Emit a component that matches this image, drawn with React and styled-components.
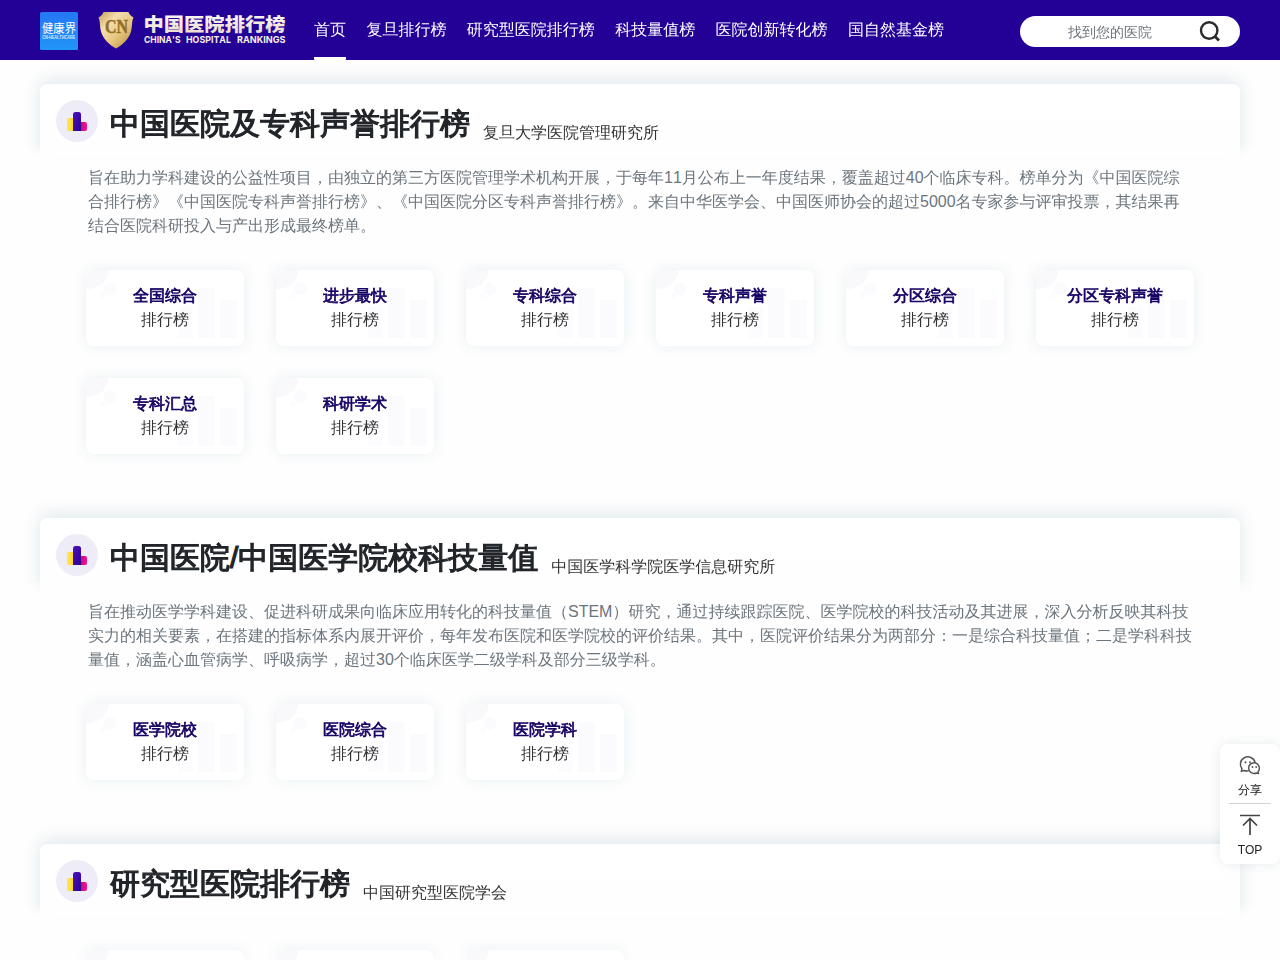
import styled, { createGlobalStyle } from 'styled-components';

const GlobalStyle = createGlobalStyle`
    * {
        box-sizing: border-box;
    }

    body {
        margin: 0;
        height: 960px;
        overflow: hidden;
        background: #fefefe;
        color: #212529;
        font-family: "Liberation Sans", "WenQuanYi Zen Hei", "Noto Sans CJK SC", sans-serif;
        font-size: 16px;
        line-height: 24px;
        font-kerning: none;
        text-spacing-trim: space-all;
    }
`

const menu = ['首页', '复旦排行榜', '研究型医院排行榜', '科技量值榜', '医院创新转化榜', '国自然基金榜'];

const sections = [
    {
        title: '中国医院及专科声誉排行榜',
        author: '复旦大学医院管理研究所',
        text: [
            '旨在助力学科建设的公益性项目，由独立的第三方医院管理学术机构开展，于每年11月公布上一年度结果，覆盖超过40个临床专科。榜单分为《中国医院综',
            '合排行榜》《中国医院专科声誉排行榜》、《中国医院分区专科声誉排行榜》。来自中华医学会、中国医师协会的超过5000名专家参与评审投票，其结果再',
            '结合医院科研投入与产出形成最终榜单。',
        ],
        cards: ['全国综合', '进步最快', '专科综合', '专科声誉', '分区综合', '分区专科声誉', '专科汇总', '科研学术'],
    },
    {
        title: '中国医院/中国医学院校科技量值',
        author: '中国医学科学院医学信息研究所',
        text: [
            '旨在推动医学学科建设、促进科研成果向临床应用转化的科技量值（STEM）研究，通过持续跟踪医院、医学院校的科技活动及其进展，深入分析反映其科技',
            '实力的相关要素，在搭建的指标体系内展开评价，每年发布医院和医学院校的评价结果。其中，医院评价结果分为两部分：一是综合科技量值；二是学科科技',
            '量值，涵盖心血管病学、呼吸病学，超过30个临床医学二级学科及部分三级学科。',
        ],
        cards: ['医学院校', '医院综合', '医院学科'],
    },
    {
        title: '研究型医院排行榜',
        author: '中国研究型医院学会',
        text: [],
        cards: ['', '', ''],
    },
];

function BrandLogo() {
    return <BrandSvg viewBox="0 0 190 40">
        <defs>
            <linearGradient id="gold" x1="0" y1="0" x2="1" y2="1">
                <stop offset="0" stopColor="#c29c50" />
                <stop offset=".3" stopColor="#f3dfae" />
                <stop offset=".6" stopColor="#e6c67c" />
                <stop offset="1" stopColor="#b08538" />
            </linearGradient>
            <linearGradient id="cream" x1="0" y1="0" x2="0" y2="1">
                <stop offset="0" stopColor="#fff" />
                <stop offset="1" stopColor="#e9d9c8" />
            </linearGradient>
        </defs>
        <path d="M5.500 1H30.500C31 3 33 5 35.500 6.500C33.500 11 34.500 15 33 20.500C31 28 24.500 34 18 37.500C11.500 34 5 28 3 20.500C1.500 15 2.500 11 .5 6.500C3 5 5 3 5.500 1Z" fill="url(#gold)" />
        <text x="7" y="22" textLength="23" lengthAdjust="spacingAndGlyphs" fontFamily="Liberation Serif" fontWeight="700" fontSize="18" fill="#92702a" stroke="#92702a" strokeWidth=".5">CN</text>
        <text x="45.500" y="19.500" textLength="142" lengthAdjust="spacingAndGlyphs" fontFamily="Noto Sans CJK SC" fontWeight="900" fontSize="18.500" fill="url(#cream)">中国医院排行榜</text>
        <BrandCaption x="46" y="32" textLength="36.500" lengthAdjust="spacingAndGlyphs">CHINA'S</BrandCaption>
        <BrandCaption x="88" y="32" textLength="45" lengthAdjust="spacingAndGlyphs">HOSPITAL</BrandCaption>
        <BrandCaption x="139" y="32" textLength="48.500" lengthAdjust="spacingAndGlyphs">RANKINGS</BrandCaption>
    </BrandSvg>
}

function HealthLogo() {
    return <HealthSvg viewBox="0 0 38 38">
        <defs>
            <linearGradient id="blue" x1="0" y1="0" x2="0" y2="1">
                <stop offset="0" stopColor="#2477f4" />
                <stop offset="1" stopColor="#2196f8" />
            </linearGradient>
        </defs>
        <rect width="38" height="38" rx="1.500" fill="url(#blue)" />
        <text x="2" y="20.500" textLength="34" lengthAdjust="spacingAndGlyphs" fontFamily="Noto Sans CJK SC" fontSize="12" fill="#fff">健康界</text>
        <text x="2.200" y="26.500" textLength="33" lengthAdjust="spacingAndGlyphs" fontFamily="Liberation Sans" fontWeight="700" fontSize="4.500" fill="#d5eaff">CN-HEALTHCARE</text>
    </HealthSvg>
}

function ChartIcon() {
    return <Badge viewBox="0 0 42 42">
        <defs>
            <linearGradient id="yellow" x1="0" x2="1">
                <stop offset="0" stopColor="#ffe650" />
                <stop offset="1" stopColor="#ffd01e" />
            </linearGradient>
            <linearGradient id="pink" x1="0" x2="1">
                <stop offset="0" stopColor="#c4007c" />
                <stop offset="1" stopColor="#f0158e" />
            </linearGradient>
            <linearGradient id="violet" x1="0" y1="0" x2="1" y2="1">
                <stop offset="0" stopColor="#5210c0" />
                <stop offset="1" stopColor="#26008f" />
            </linearGradient>
        </defs>
        <circle cx="21" cy="21" r="21" fill="#eeedf7" />
        <rect x="11" y="18" width="9" height="13" rx="2" fill="url(#yellow)" />
        <rect x="22" y="22" width="9" height="9" rx="2" fill="url(#pink)" />
        <path d="M17 14.500Q17 12 19.500 12H22.500Q25 12 25 14.500V31H17Z" fill="url(#violet)" />
    </Badge>
}

function CardPattern() {
    return <Pattern viewBox="0 0 158 76">
        <path d="M0 0H22.500C22.500 11 13 19 0 19Z" fill="#f9f9fc" />
        <circle cx="24" cy="19" r="6.500" fill="#fbfbfd" />
        <circle cx="17" cy="26" r="3" fill="#fcfcfe" />
        <rect x="92" y="37" width="15" height="31" fill="#fcfcfe" />
        <rect x="112" y="18" width="16.500" height="50" fill="#fbfbfd" />
        <rect x="134" y="30" width="17" height="38" fill="#fbfbfd" />
    </Pattern>
}

function Section({ title, author, text, cards }) {
    return <SectionWrapper>
        <SectionHeader>
            <ChartIcon />
            <Title>{title}</Title>
            <Author>{author}</Author>
        </SectionHeader>
        <SectionBody>
            <Divider />
            {text.length > 0 && <Description>
                {text.map((line) => <p key={line}>{line}</p>)}
            </Description>}
            <Cards $offset={text.length ? 32 : 30}>
                {cards.map((name, i) => <Card key={i} $short={!name}>
                    <CardPattern />
                    {name && <>
                        <strong>{name}</strong>
                        <span>排行榜</span>
                    </>}
                </Card>)}
            </Cards>
        </SectionBody>
    </SectionWrapper>
}

function SideBar() {
    return <SideWrapper>
        <SideItem>
            <svg width="22" height="20" viewBox="0 0 22 20" fill="none" stroke="#555" strokeWidth="1.500" strokeLinecap="round" strokeLinejoin="round">
                <path d="M9.200 15.800C7.800 16.200 6.500 16 5.200 15.500L2.300 16.300L2.900 13.600C.3 10.500 1.200 5.200 4.900 3C9.600.3 15 2.800 16 7.200" />
                <path d="M19 16.900C21.100 14.500 20.800 10.800 18.300 8.800C15.400 6.900 11.600 7.800 10 10.900C8.500 14.300 11 18.100 14.500 18.400C15.500 18.500 16.500 18.400 17.300 18L19.500 18.600Z" />
                <path d="M6.500 7.300V7.400M11 7.300V7.400M13.500 12V12.100M17.200 12V12.100" strokeWidth="1.900" />
            </svg>
            <span>分享</span>
        </SideItem>
        <SideItem $line>
            <svg width="22" height="22" viewBox="0 0 22 22" fill="none" stroke="#444" strokeWidth="1.700">
                <path d="M1 1.500H21M11 21V5M4 11.500L11 4.500L18 11.500" />
            </svg>
            <span>TOP</span>
        </SideItem>
    </SideWrapper>
}

function App() {
    return <>
        <GlobalStyle />
        <Header>
            <HealthLogo />
            <BrandLogo />
            <Nav>
                {menu.map((item, i) => <NavLink key={item} $active={i === 0}>{item}</NavLink>)}
            </Nav>
            <Search>
                <span>找到您的医院</span>
                <svg width="22" height="22" viewBox="0 0 22 22" fill="none" stroke="#2b2b2b" strokeWidth="2.400">
                    <circle cx="10.200" cy="9.500" r="8.200" />
                    <path d="M16 15.500L20 19.500" strokeWidth="2.800" />
                </svg>
            </Search>
        </Header>
        <Main>
            {sections.map((section) => <Section key={section.title} {...section} />)}
        </Main>
        <SideBar />
    </>
}
export default App;

const Header = styled.header`
    display: flex;
    align-items: flex-start;
    height: 60px;
    padding: 0 40px;
    background: #230096;
`

const HealthSvg = styled.svg`
    width: 38px;
    height: 38px;
    margin-top: 12px;
`

const BrandSvg = styled.svg`
    width: 190px;
    height: 40px;
    margin: 11px 0 0 20px;
`

const BrandCaption = styled.text`
    font-family: Inter, sans-serif;
    font-size: 9.4px;
    font-weight: 700;
    fill: #f7eee8;
`

const Nav = styled.nav`
    display: flex;
    gap: 20.39px;
    height: 60px;
    margin-left: 26px;
`

const NavLink = styled.a`
    height: 60px;
    padding-top: 18px;
    color: #fff;
    white-space: nowrap;
    border-bottom: 3px solid ${({ $active }) => $active ? '#fff' : 'transparent'};
    border-radius: 1px;
`

const Search = styled.div`
    display: flex;
    align-items: center;
    justify-content: space-between;
    width: 220px;
    height: 31px;
    margin: 16px 0 0 auto;
    padding: 0 19px 0 48px;
    background: #fff;
    border-radius: 16px;
    color: #6c757d;
    font-size: 14px;
`

const Main = styled.main`
    width: 1200px;
    height: 900px;
    margin: 0 auto;
    padding-top: 24px;
`

const SectionWrapper = styled.section`
    margin-bottom: 64px;

        &:last-child {
            margin-bottom: 0;
        }
`

const SectionHeader = styled.div`
    display: flex;
    align-items: flex-start;
    height: 76px;
    padding: 16px 16px 0;
    background: linear-gradient(#fff, #fefefe);
    border-radius: 8px 8px 0 0;
    box-shadow: 0 -4px 18px rgba(0, 72, 98, .12);
`

const Badge = styled.svg`
    width: 42px;
    height: 42px;
`

/* the stroke gives the CJK glyphs their bold weight */
const Title = styled.h2`
    margin: 6px 13px 0 12px;
    font-size: 30px;
    line-height: 36px;
    font-weight: 400;
    -webkit-text-stroke: 1.2px #212529;
`

const Author = styled.span`
    margin-top: 21px;
    color: #333;
`

/* fades out the lower part of the header shadow */
const SectionBody = styled.div`
    position: relative;
    margin: -14px -30px 0;
    padding: 13px 76px 0;
    background: linear-gradient(rgba(254, 254, 254, 0), #fefefe 14px);
`

const Divider = styled.div`
    height: 1px;
    margin: 0 -30px;
    background: #fbfcfc;
`

const Description = styled.div`
    padding: 6px 0 0 2px;
    color: #6c757d;
    white-space: nowrap;

        p {
            margin: 0;
        }
`

const Cards = styled.div`
    display: grid;
    grid-template-columns: repeat(6, 158px);
    gap: 32px;
    padding-top: ${({ $offset }) => $offset}px;
`

const Card = styled.div`
    position: relative;
    display: flex;
    flex-direction: column;
    align-items: center;
    height: ${({ $short }) => $short ? '10px' : '76px'};
    padding-top: ${({ $short }) => $short ? '0' : '14px'};
    overflow: hidden;
    background: #fff;
    border-radius: ${({ $short }) => $short ? '8px 8px 0 0' : '8px'};
    box-shadow: 0 0 15px rgba(0, 90, 120, .09);

        strong {
            position: relative;
            color: #150063;
            -webkit-text-stroke: .7px #150063;
        }

        span {
            position: relative;
            color: #333;
        }
`

const Pattern = styled.svg`
    position: absolute;
    top: 0;
    left: 0;
    width: 158px;
    height: 76px;
`

const SideWrapper = styled.aside`
    position: fixed;
    top: 744px;
    right: 0;
    width: 60px;
    height: 120px;
    padding: 0 9px;
    background: #fff;
    border-radius: 8px;
    box-shadow: 0 0 12px rgba(0, 66, 92, .1);
`

const SideItem = styled.div`
    display: flex;
    flex-direction: column;
    align-items: center;
    justify-content: space-between;
    height: ${({ $line }) => $line ? '61px' : '60px'};
    padding: ${({ $line }) => $line ? '10px 0 5px' : '11px 0 5px'};
    border-top: ${({ $line }) => $line ? '1px solid #d3d3d3' : '0'};
    margin-top: ${({ $line }) => $line ? '-1px' : '0'};
    font-size: 12px;
    line-height: 18px;
    color: #222;
`
